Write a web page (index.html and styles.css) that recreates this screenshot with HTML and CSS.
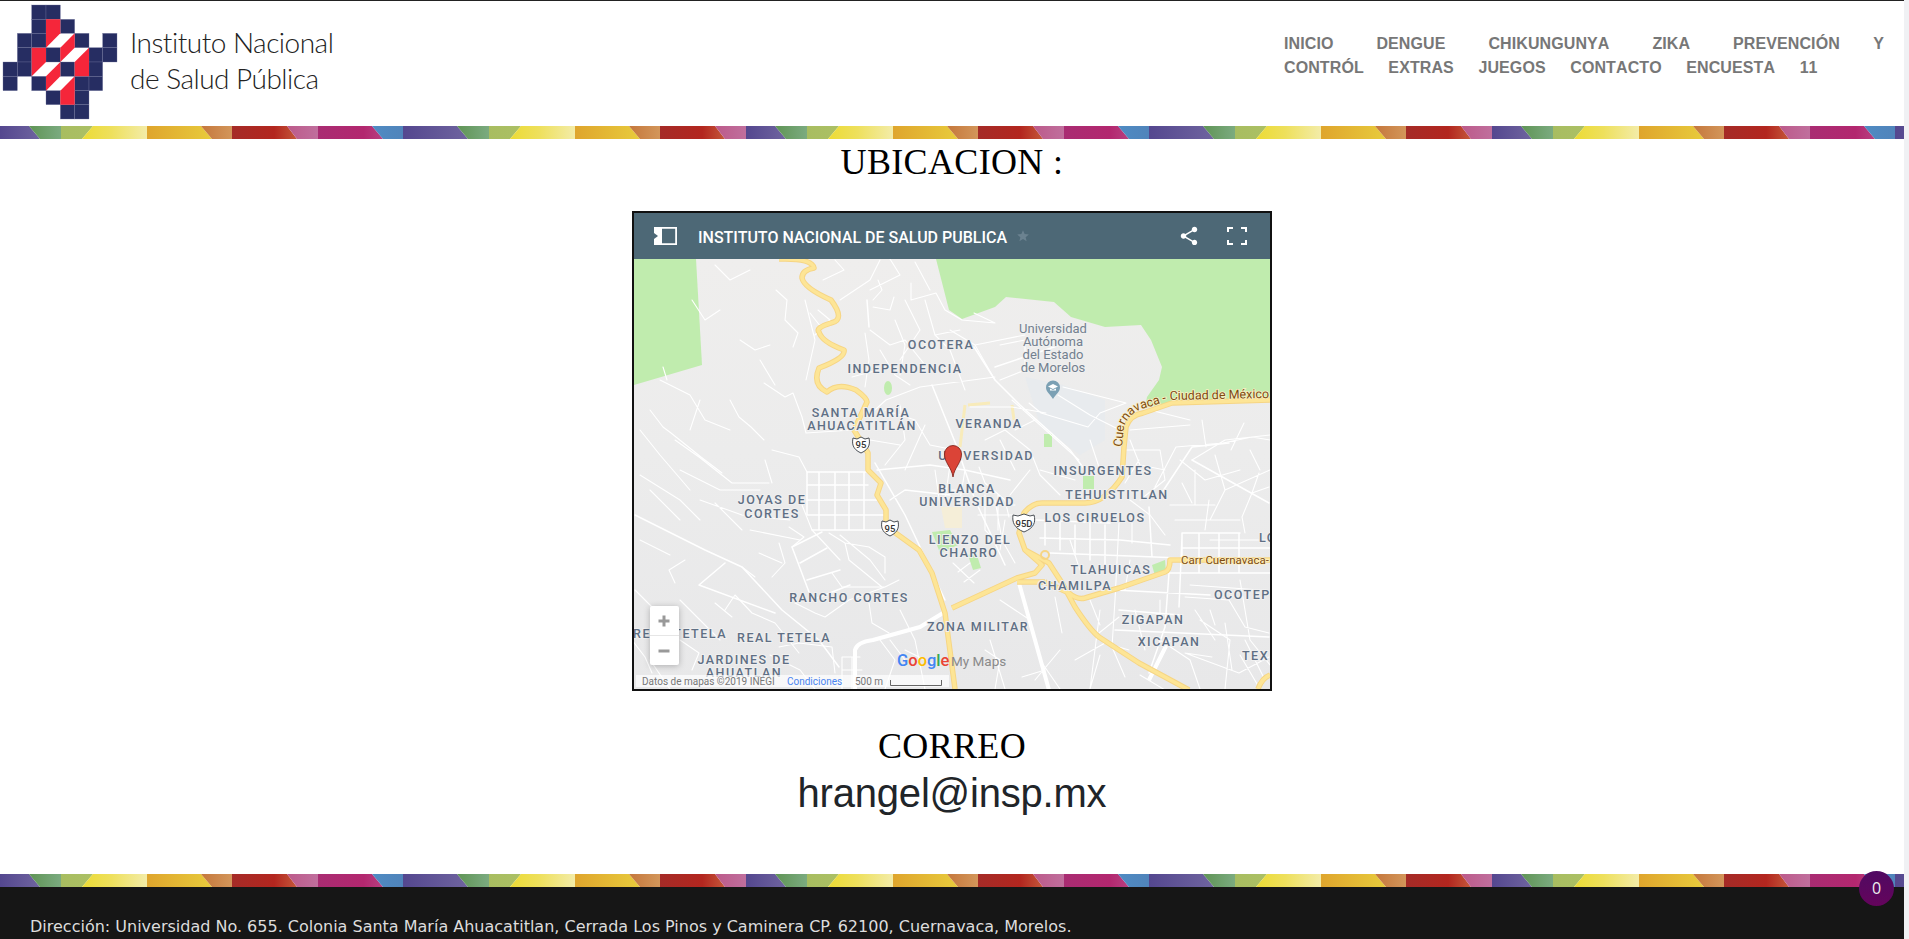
FILE: index.html
```html
<!DOCTYPE html>
<html lang="es">
<head>
<meta charset="utf-8">
<title>Instituto Nacional de Salud Pública</title>
<link rel="stylesheet" href="styles.css">
</head>
<body>
<div class="page">
  <svg class="defs" width="0" height="0" aria-hidden="true">
    <defs>
      <linearGradient id="gPurple"><stop offset="0" stop-color="#54478f"/><stop offset="1" stop-color="#6f649f"/></linearGradient>
      <linearGradient id="gGreen"><stop offset="0" stop-color="#5f9455"/><stop offset="1" stop-color="#7bab80"/></linearGradient>
      <linearGradient id="gLime"><stop offset="0" stop-color="#a8bd60"/><stop offset="1" stop-color="#abc065"/></linearGradient>
      <linearGradient id="gYellow"><stop offset="0" stop-color="#ecdb35"/><stop offset="0.45" stop-color="#eee05c"/><stop offset="1" stop-color="#f3eca8"/></linearGradient>
      <linearGradient id="gAmber"><stop offset="0" stop-color="#dfa52d"/><stop offset="1" stop-color="#e8cb3c"/></linearGradient>
      <linearGradient id="gOrange"><stop offset="0" stop-color="#c5773c"/><stop offset="1" stop-color="#d3965a"/></linearGradient>
      <linearGradient id="gRed"><stop offset="0" stop-color="#a52b27"/><stop offset="0.65" stop-color="#b3261f"/><stop offset="1" stop-color="#c4583a"/></linearGradient>
      <linearGradient id="gPink"><stop offset="0" stop-color="#bc5a8a"/><stop offset="1" stop-color="#c06f9d"/></linearGradient>
      <linearGradient id="gMagenta"><stop offset="0" stop-color="#a92c72"/><stop offset="0.7" stop-color="#b3276f"/><stop offset="1" stop-color="#b84080"/></linearGradient>
      <linearGradient id="gBlue"><stop offset="0" stop-color="#4f8bc3"/><stop offset="1" stop-color="#5084bb"/></linearGradient>
      <linearGradient id="gLand" x1="0" y1="0" x2="0" y2="1"><stop offset="0" stop-color="#efeeed"/><stop offset="0.45" stop-color="#ececec"/><stop offset="1" stop-color="#e8e8e9"/></linearGradient>
      <pattern id="rainbow" width="746" height="13" patternUnits="userSpaceOnUse">
        <polygon fill="url(#gPurple)" points="0,0 29,0 40,13 0,13"/>
        <g id="seq">
          <polygon fill="url(#gGreen)" points="29,0 61,0 61,13 40,13"/>
          <polygon fill="url(#gLime)" points="61,0 93,0 82,13 61,13"/>
          <polygon fill="url(#gYellow)" points="93,0 147,0 147,13 82,13"/>
          <polygon fill="url(#gAmber)" points="147,0 201,0 212,13 147,13"/>
          <polygon fill="url(#gOrange)" points="201,0 232,0 232,13 212,13"/>
          <polygon fill="url(#gRed)" points="232,0 287,0 297,13 232,13"/>
          <polygon fill="url(#gPink)" points="287,0 318,0 318,13 297,13"/>
        </g>
        <polygon fill="url(#gMagenta)" points="318,0 372,0 383,13 318,13"/>
        <polygon fill="url(#gBlue)" points="372,0 403,0 403,13 383,13"/>
        <polygon fill="url(#gPurple)" points="403,0 457,0 468,13 403,13"/>
        <use href="#seq" x="428"/>
      </pattern>
    </defs>
  </svg>

  <header class="site-header">
    <a class="brand" href="#">
      <svg class="brand-mark" viewBox="0 0 390 375" width="130" height="125" aria-hidden="true">
        <g class="cells">
          <rect x="95" y="15" width="43" height="43"/><rect x="138" y="15" width="43" height="43"/>
          <rect x="95" y="58" width="43" height="42"/><rect x="181" y="58" width="43" height="42"/>
          <rect x="52" y="100" width="43" height="43"/><rect x="95" y="100" width="43" height="43"/><rect x="224" y="100" width="43" height="43"/><rect x="308" y="100" width="43" height="43"/>
          <rect x="52" y="143" width="43" height="43"/><rect x="138" y="143" width="43" height="43"/><rect x="267" y="143" width="41" height="43"/><rect x="308" y="143" width="43" height="43"/>
          <rect x="9" y="186" width="43" height="43"/><rect x="52" y="186" width="43" height="43"/><rect x="181" y="186" width="43" height="43"/><rect x="267" y="186" width="41" height="43"/>
          <rect x="9" y="229" width="43" height="43"/><rect x="95" y="229" width="43" height="43"/><rect x="224" y="229" width="43" height="43"/><rect x="267" y="229" width="41" height="43"/>
          <rect x="138" y="272" width="43" height="42"/><rect x="224" y="272" width="43" height="42"/>
          <rect x="181" y="314" width="43" height="43"/><rect x="224" y="314" width="43" height="43"/>
        </g>
        <g class="reds">
          <polygon points="138,58 181,58 181,100 138,143"/>
          <polygon points="181,143 224,100 224,143 181,186"/>
          <polygon points="267,143 267,229 224,229 224,186"/>
          <polygon points="95,143 138,143 138,186 95,229"/>
          <polygon points="181,186 181,229 138,272 138,229"/>
          <polygon points="224,229 224,314 181,314 181,272"/>
        </g>
      </svg>
      <span class="brand-name">Instituto Nacional<br>de Salud Pública</span>
    </a>
    <nav class="site-nav">
      <a href="#">INICIO</a> <a href="#">DENGUE</a> <a href="#">CHIKUNGUNYA</a> <a href="#">ZIKA</a> <a href="#">PREVENCIÓN Y CONTRÓL</a> <a href="#">EXTRAS</a> <a href="#">JUEGOS</a> <a href="#">CONTACTO</a> <a href="#">ENCUESTA</a> <a href="#">11</a>
    </nav>
  </header>
  <svg class="stripe" height="13" aria-hidden="true"><rect width="100%" height="13" fill="url(#rainbow)"/></svg>

  <main class="content">
    <h2 class="title">UBICACION :</h2>
    <div class="map-frame">
      <div class="map-bar">
        <svg class="bar-icon" viewBox="0 0 23 18" width="23" height="18" aria-hidden="true">
          <path d="M0 0h23v18H0z M8 1.800v14.400h13.200V1.800z" fill="#fff" fill-rule="evenodd"/>
          <path d="M0 6l4 3-4 3z" fill="#4d6876"/>
        </svg>
        <span class="map-title">INSTITUTO NACIONAL DE SALUD PUBLICA</span>
        <svg class="bar-star" viewBox="0 0 24 24" width="14" height="14" aria-hidden="true"><path d="M12 17.27L18.18 21l-1.64-7.03L22 9.24l-7.19-.61L12 2 9.19 8.63 2 9.24l5.46 4.73L5.82 21z"/></svg>
        <span class="bar-spacer"></span>
        <svg class="bar-tool" viewBox="0 0 24 24" width="22" height="22" aria-hidden="true"><path d="M18 16.08c-.76 0-1.44.3-1.96.77L8.91 12.7c.05-.23.09-.46.09-.7s-.04-.47-.09-.7l7.05-4.11c.54.5 1.25.81 2.04.81 1.66 0 3-1.34 3-3s-1.34-3-3-3-3 1.34-3 3c0 .24.04.47.09.7L8.04 9.81C7.5 9.31 6.79 9 6 9c-1.66 0-3 1.34-3 3s1.34 3 3 3c.79 0 1.5-.31 2.04-.81l7.12 4.16c-.05.21-.08.43-.08.65 0 1.61 1.31 2.92 2.92 2.92 1.61 0 2.92-1.31 2.92-2.92s-1.31-2.92-2.92-2.92z"/></svg>
        <svg class="bar-full" viewBox="0 0 20 18" width="20" height="18" aria-hidden="true"><path d="M1 5V1H6M14 1H19V5M19 13V17H14M6 17H1V13"/></svg>
      </div>
      <svg class="map" viewBox="634 259 636 430" width="636" height="430" role="img" aria-label="Mapa">
        <rect class="land" x="634" y="259" width="636" height="430"/>
        <polygon class="campus" points="1025,377 1063,385 1105,400 1105,440 1080,455 1040,425"/>
        <polygon class="park" points="634,259 696,259 702,365 634,385"/>
        <polygon class="park" points="936,259 949,310 962,319 995,307 1006,297 1054,302 1071,317 1105,327 1141,325 1151,340 1162,367 1159,380 1147,397 1145,408 1172,402 1270,399 1270,259"/>
        <ellipse class="park" cx="888" cy="388" rx="4" ry="7"/>
        <rect class="park" x="1044" y="434" width="8" height="13"/>
        <rect class="park" x="1083" y="476" width="11" height="13"/>
        <polygon class="park" points="1152,565 1165,560 1166,572 1155,576"/>
        <polygon class="park" points="932,532 950,530 958,545 940,553"/>
        <polygon class="park" points="968,555 976,552 981,568 973,570"/>

        <path class="pale" d="M965 405L960 447M968 405L990 403M1012 405L1014 420"/>
        <polygon class="pale-block" points="941,507 962,507 962,528 945,528"/>

        <path class="road-thin" d="M835 260L844 270L823 280M878 280L882 290L873 300M894 297L890 310L873 307M911 283V300L936 293L945 310L962 320L995 323L974 313M776 290L787 300L785 320L798 333L793 347M810 313L821 327M818 310L830 320L815 335M663 367L667 380M650 410L663 427L671 433L701 457L722 473M730 400L739 417L751 427L764 440M793 393L802 417L806 433L852 430M764 383L785 397L793 393M852 377L878 370M865 333L869 360L865 387M920 387L995 377M920 387L886 400L867 417M970 407H1012L1046 413M1012 400L1079 460M1063 387L1126 403L1100 413L1088 427L1041 413L1029 403M1176 447L1155 487M1176 447L1223 443L1252 437L1270 440M1202 420L1206 447M1244 423L1231 450M675 440L699 457L732 483H769M765 460L772 483M772 450L799 457L807 472M715 503L742 530M789 527L804 537L792 547M779 543L785 563L772 577M759 553L782 563M685 560L669 570L675 583M715 603L732 617M725 610L735 595L752 613L775 623L799 653M755 577L742 567M795 603L815 613L825 617L849 600L885 587L899 580M832 573L842 587H859L885 587M845 543L849 560L865 573L882 587M829 533L845 543L869 547L885 557V573M869 603L872 623L889 633M842 657H860M842 670H862M842 657V689M852 657V689M779 647L799 643L832 647L835 673M632 640L645 657L652 673M680 640L699 653L692 670M979 467L985 483L1005 500L1009 517M952 490L995 493M995 500L1002 540L1015 563M953 563L974 583M958 572L970 563M964 582L980 570M1022 677L1045 670M1075 660L1105 643L1129 650M1119 617L1099 633M1119 523L1115 600L1112 647L1125 677M1055 597L1062 633M1185 597L1229 600L1245 627L1269 633M1212 657L1185 653M1185 653L1239 673L1269 657M1225 623L1232 670M1245 533L1242 517L1252 493L1269 487M1209 500L1205 530M1182 483L1192 503M1259 473L1252 493M1139 460L1125 483M1132 517V543M740 340L755 350L770 345M692 300L705 320L720 310M715 265L730 280L750 270M805 300L815 340L806 380M880 260L870 280L840 300M890 259L900 275L870 290M905 300L920 330L900 360M915 262L930 290M950 330L975 345L995 380M975 345L1025 335M1000 345L1025 340V370L1000 380M1058 395L1090 415L1120 430M1090 440L1100 470M1125 450L1160 450L1165 480L1140 500M1192 460L1225 440L1270 435M1270 470L1225 490L1210 520M1130 430L1190 425M1150 410L1190 420M700 500L742 515L790 520M680 470L720 490L760 490M640 475L680 500L700 520M750 530L800 540M800 500L812 530L840 560M840 535L870 560L885 580M635 590L665 620M680 600L700 620L720 640M650 660L670 689M1000 600L1030 620L1040 660L1060 689M1100 610L1090 689M1160 640L1190 660L1200 689M1200 620L1230 640L1225 689M1240 580L1250 640L1270 665M1035 680L1060 650M990 640L1005 689M1080 570L1070 540M1130 560L1125 590M660 380L690 395L705 420L730 430M700 400L690 430M760 360L775 385M640 430L660 455L690 490M650 490L680 520M640 540L670 555M770 655L800 670L815 689M900 610L915 640L925 689M890 640L905 660M985 650L1000 660L995 689M1160 600V620M1210 610L1215 625M1245 640L1265 680M1180 460L1205 480L1240 470M1100 655L1090 689M1140 675L1165 690M870 330L890 345L905 340L925 365M895 320L905 345L900 375M880 350L895 375L910 385M925 300L935 335L950 350L965 390M935 335L960 330M885 410L915 420L930 445L955 450M900 405L905 440L885 465M925 425L905 470M870 440L900 445M935 470L940 505M950 465L945 500M965 470L960 500M985 440L1005 430L1030 450L1040 475L1060 495M1000 440L1015 470M1030 470L1010 495M1040 470L1075 480M1015 430L1035 420M975 505H1015M978 515H1012M985 495V530M998 495V530M1005 520L1000 550M985 530L1000 545M1130 440L1140 465L1165 470M1195 470V505M1215 455L1225 490M1250 450L1260 470M1130 500L1150 515L1165 535M1170 505H1215M1175 520H1240M1210 540H1270M1190 585L1260 590M1195 610L1215 640M1240 655L1260 689M1090 600L1100 625M1135 610L1145 650M880 640L895 660L885 689M905 650L935 665"/>
        <path class="road" d="M807 472H870M807 485H868M807 500H878M807 515H884M812 530H885M807 472V515M819 472V530M835 472V530M849 472V530M864 472V530M875 463L905 515L945 600M792 547L812 600M792 547L822 532M800 563L827 548M807 580L840 570M812 600L850 585M635 515L705 550L742 567L782 610L819 640L839 667M699 585L725 563M699 585L775 613M877 470L930 465L965 470L1010 480M932 385L957 447L975 500L1005 565M974 347L995 380L1020 405L1070 450L1085 470M995 367L1060 345M867 300L869 327M890 500L905 490L950 495M1115 630L1269 637M1149 507L1152 557M1169 573L1165 627L1149 673M1182 537L1179 607M1182 533H1240M1182 548H1270M1160 573H1270M1182 533V560M1199 533V573M1219 533V573M1239 533V573M1159 497L1192 447L1229 443M1192 460L1269 503M1035 520L1110 523M1040 538L1120 540L1170 545M1050 553L1130 556L1180 558M1045 520V545M1060 520V550M1075 525V555M1090 520V560M1105 525V570M1115 590L1210 595M1119 610L1180 615"/>
        <path class="road-wide" d="M855 690V650Q857 642 873 640L920 627L943 613M1019 583L1049 690M1169 640L1149 680"/>

        <path class="hw-b" d="M779 259Q812 258 814 268Q802 270 802 278Q804 288 831 300Q846 320 831 323Q815 328 819 332Q822 342 844 350Q846 358 819 368Q812 385 827 392Q838 382 856 390Q867 398 867 402L854 430L868 453V470L881 483L877 495L886 510V520L890 529L919 550L932 573L945 613L955 689M952 608L1017 578L1035 573L1042 565L1025 550L1019 533L1024 513Q1032 503 1042 503L1085 503Q1105 503 1122 477L1124 447L1126 427Q1130 415 1143 413L1172 403L1270 400M1025 550L1049 563L1062 583L1075 607Q1090 630 1099 637L1139 663L1189 690M1017 582H1045M1045 582L1069 593Q1077 600 1085 598L1119 588L1165 572Q1170 570 1170 560H1270M1258 689Q1262 678 1270 675"/>
        <path class="hw" d="M779 259Q812 258 814 268Q802 270 802 278Q804 288 831 300Q846 320 831 323Q815 328 819 332Q822 342 844 350Q846 358 819 368Q812 385 827 392Q838 382 856 390Q867 398 867 402L854 430L868 453V470L881 483L877 495L886 510V520L890 529L919 550L932 573L945 613L955 689M952 608L1017 578L1035 573L1042 565L1025 550L1019 533L1024 513Q1032 503 1042 503L1085 503Q1105 503 1122 477L1124 447L1126 427Q1130 415 1143 413L1172 403L1270 400M1025 550L1049 563L1062 583L1075 607Q1090 630 1099 637L1139 663L1189 690M1017 582H1045M1045 582L1069 593Q1077 600 1085 598L1119 588L1165 572Q1170 570 1170 560H1270M1258 689Q1262 678 1270 675"/>
        <circle class="hw-ring" cx="1045" cy="555" r="4"/>

        <path id="cuernavacaRoad" class="none" d="M1122 447L1124 427Q1130 412 1145 408L1172 400L1270 398"/>
        <text class="road-label road-label-curve"><textPath href="#cuernavacaRoad">Cuernavaca - Ciudad de México</textPath></text>
        <text class="road-label" x="1181" y="564">Carr Cuernavaca-</text>

        <g class="labels">
          <text x="941" y="349">OCOTERA</text>
          <text x="905" y="373">INDEPENDENCIA</text>
          <text x="861" y="417">SANTA MARÍA</text>
          <text x="862" y="430">AHUACATITLÁN</text>
          <text x="989" y="428">VERANDA</text>
          <text x="986" y="460">UNIVERSIDAD</text>
          <text x="967" y="493">BLANCA</text>
          <text x="967" y="506">UNIVERSIDAD</text>
          <text x="1103" y="475">INSURGENTES</text>
          <text x="1117" y="499">TEHUISTITLAN</text>
          <text x="772" y="504">JOYAS DE</text>
          <text x="772" y="518">CORTES</text>
          <text x="970" y="544">LIENZO DEL</text>
          <text x="969" y="557">CHARRO</text>
          <text x="1095" y="522">LOS CIRUELOS</text>
          <text x="1111" y="574">TLAHUICAS</text>
          <text x="1075" y="590">CHAMILPA</text>
          <text x="849" y="602">RANCHO CORTES</text>
          <text x="978" y="631">ZONA MILITAR</text>
          <text x="1153" y="624">ZIGAPAN</text>
          <text x="1169" y="646">XICAPAN</text>
          <text x="784" y="642">REAL TETELA</text>
          <text x="680" y="638">REAL TETELA</text>
          <text x="744" y="664">JARDINES DE</text>
          <text x="744" y="677">AHUATLAN</text>
          <text class="start" x="1214" y="599">OCOTEP</text>
          <text class="start" x="1259" y="542">LO</text>
          <text class="start" x="1242" y="660">TEX</text>
        </g>

        <g class="poi">
          <text x="1053" y="333">Universidad</text>
          <text x="1053" y="346">Autónoma</text>
          <text x="1053" y="359">del Estado</text>
          <text x="1053" y="372">de Morelos</text>
        </g>
        <path class="poi-pin" d="M1053 399C1050 394 1046 392 1046 387.500A7 7 0 0 1 1060 387.500C1060 392 1056 394 1053 399Z"/>
        <path class="poi-cap" d="M1053 384L1058 386.500L1053 389L1048 386.500ZM1050 388.500V390.500H1056V388.500L1053 390Z"/>

        <g class="shield">
          <path d="M853 438L857 439L861 437L865 439L869 438C870 443 870 449 861 453C852 449 852 443 853 438Z"/>
          <text x="861" y="448">95</text>
        </g>
        <g class="shield">
          <path d="M882 521L886 522L890 520L894 522L898 521C899 526 899 532 890 536C881 532 881 526 882 521Z"/>
          <text x="890" y="532">95</text>
        </g>
        <g class="shield">
          <path d="M1013 515L1018 516L1024 514L1030 516L1034 515C1036 522 1034 528 1024 532C1014 528 1012 522 1013 515Z"/>
          <text x="1024" y="527">95D</text>
        </g>

        <path class="marker" d="M953 477C951.500 467 944.500 463 944.500 454A8.500 8.500 0 0 1 961.500 454C961.500 463 954.500 467 953 477Z"/>

        <g class="zoom-box">
          <rect x="650" y="606" width="29" height="59" rx="2"/>
        </g>
        <line class="zoom-div" x1="650" y1="635.500" x2="679" y2="635.500"/>
        <path class="zoom-glyph" d="M658.500 621H669.500M664 615.500V626.500M658.500 651H669.500"/>

        <text class="google" x="897" y="666"><tspan fill="#4285f4">G</tspan><tspan fill="#ea4335">o</tspan><tspan fill="#fbbc05">o</tspan><tspan fill="#4285f4">g</tspan><tspan fill="#34a853">l</tspan><tspan fill="#ea4335">e</tspan></text>
        <text class="mymaps" x="951" y="666">My Maps</text>

        <rect class="attrib" x="636" y="675" width="313" height="12"/>
        <text class="attrib-text" x="642" y="685">Datos de mapas ©2019 INEGI</text>
        <text class="attrib-link" x="787" y="685">Condiciones</text>
        <text class="attrib-text" x="855" y="685">500 m</text>
        <path class="scale" d="M890.500 680V685.500H941.500V680"/>
      </svg>
    </div>
    <h2 class="title title-mail">CORREO</h2>
    <p class="mail">hrangel@insp.mx</p>
  </main>

  <svg class="stripe" height="13" aria-hidden="true"><rect width="100%" height="13" fill="url(#rainbow)"/></svg>
  <footer class="site-footer">
    <p>Dirección: Universidad No. 655. Colonia Santa María Ahuacatitlan, Cerrada Los Pinos y Caminera CP. 62100, Cuernavaca, Morelos.</p>
  </footer>
  <div class="badge">0</div>
</div>
</body>
</html>
```
FILE: styles.css
```css
html, body {
  margin: 0;
  height: 100%;
  overflow: hidden;
  background: #f0f1f4;
}
.page {
  margin-right: 5px;
  height: 939px;
  overflow: hidden;
  background: #fff;
  display: flex;
  flex-direction: column;
}
.defs { position: absolute; }
.site-header {
  box-sizing: border-box;
  height: 126px;
  border-top: 1px solid #222;
  display: flex;
  justify-content: space-between;
  align-items: flex-start;
}
.brand {
  display: flex;
  align-items: flex-start;
  text-decoration: none;
  margin-top: -1px;
}
.brand-mark { display: block; flex: none; }
.cells rect { fill: #262d62; stroke: #7477a0; stroke-width: 1; }
.reds polygon { fill: #f5263a; }
.brand-name {
  margin: 24px 0 0 0;
  font: 300 28px/36px Lato, sans-serif;
  letter-spacing: -0.5px;
  color: #222;
  white-space: nowrap;
}
.site-nav {
  width: 600px;
  margin: 31px 20px 0 0;
  font: bold 16px/24px "Liberation Sans", sans-serif;
  font-kerning: none;
  letter-spacing: 0.1px;
  text-align: justify;
  word-spacing: 10.5px;
}
.site-nav a {
  color: #777;
  text-decoration: none;
  margin-right: 9.500px;
}
.stripe { display: block; width: 100%; flex: none; }
.content {
  flex: none;
  height: 735px;
  display: flex;
  flex-direction: column;
  align-items: center;
}
.title {
  margin: 3px 0 28px;
  font: 400 36px/41px "Liberation Serif", serif;
  letter-spacing: 0.35px;
  color: #000;
}
.title-mail { margin: 35px 0 0; }
.mail {
  margin: 3px 0 0;
  font: 40px/46px "Liberation Sans", sans-serif;
  letter-spacing: -0.2px;
  color: #212529;
}
.map-frame {
  box-sizing: border-box;
  width: 640px;
  height: 480px;
  border: 2px solid #111;
  flex: none;
  display: flex;
  flex-direction: column;
}
.map-bar {
  height: 46px;
  flex: none;
  background: #4d6876;
  display: flex;
  align-items: center;
  padding: 0 23px 0 20px;
  fill: #fff;
}
.map-title {
  margin-left: 21px;
  font: 500 16px Roboto, sans-serif;
  color: #fff;
  white-space: nowrap;
  padding-top: 3px;
}
.bar-star { margin-left: 9px; fill: #6b8290; }
.bar-spacer { flex: 1; }
.bar-tool { margin-left: 27px; }
.bar-full { margin-left: 27px; fill: none; stroke: #fff; stroke-width: 2; }
.map { display: block; flex: none; }
.land { fill: url(#gLand); }
.campus { fill: #e8ebee; }
.park { fill: #c0ecae; }
.pale { fill: none; stroke: #f8ebba; stroke-width: 3; }
.pale-block { fill: #f5eed8; }
.road-thin, .road, .road-wide, .hw, .hw-b, .hw-ring, .none { fill: none; }
.road-thin { stroke: #fff; stroke-width: 1.100; stroke-linejoin: round; stroke-linecap: round; }
.road { stroke: #fff; stroke-width: 1.500; stroke-linejoin: round; stroke-linecap: round; }
.road-wide { stroke: #fff; stroke-width: 4; stroke-linejoin: round; }
.hw-b { stroke: #f6d584; stroke-width: 5.500; stroke-linejoin: round; }
.hw { stroke: #fde596; stroke-width: 3.600; stroke-linejoin: round; }
.hw-ring { stroke: #f6d584; stroke-width: 2; }
.road-label {
  font: 400 11.500px Roboto, sans-serif;
  fill: #7c4a10;
  stroke: #fdf0c4;
  stroke-width: 1.500px;
  paint-order: stroke;
}
.road-label-curve { font-size: 12.500px; }
.labels text {
  font: 500 12.500px Roboto, sans-serif;
  letter-spacing: 1.500px;
  fill: #5f6f84;
  text-anchor: middle;
  stroke: #f0f0f0;
  stroke-width: 2px;
  paint-order: stroke;
}
.labels text.start { text-anchor: start; }
.poi text {
  font: 400 13px Roboto, sans-serif;
  fill: #73808f;
  text-anchor: middle;
  stroke: #f0f0f0;
  stroke-width: 2px;
  paint-order: stroke;
}
.poi-pin { fill: #7ba0b4; }
.poi-cap { fill: #fff; }
.shield path { fill: #fff; stroke: #4a4f55; stroke-width: 1; }
.shield text {
  font: 500 9.500px Roboto, sans-serif;
  fill: #333;
  text-anchor: middle;
}
.marker { fill: #db4437; stroke: #7a1a12; stroke-width: 0.800; }
.zoom-box rect { fill: #fff; filter: drop-shadow(0 1px 3px rgba(0, 0, 0, 0.25)); }
.zoom-div { stroke: #e6e6e6; stroke-width: 1; }
.zoom-glyph { fill: none; stroke: #999; stroke-width: 3; }
.google { font: 500 16.500px Roboto, sans-serif; }
.mymaps { font: 400 13.500px Roboto, sans-serif; fill: #8a8a8a; }
.attrib { fill: #fff; fill-opacity: 0.7; }
.attrib-text { font: 400 10px Roboto, sans-serif; fill: #777; }
.attrib-link { font: 400 10px Roboto, sans-serif; fill: #4a85f0; }
.scale { fill: none; stroke: #666; stroke-width: 1; }
.site-footer {
  flex: 1;
  background: #161616;
  padding-top: 30px;
  box-sizing: border-box;
}
.site-footer p {
  margin: 0 0 0 30px;
  font: 16px/20px "DejaVu Sans", sans-serif;
  color: #ddd;
  white-space: nowrap;
}
.badge {
  position: fixed;
  left: 1859px;
  top: 871px;
  width: 35px;
  height: 35px;
  border-radius: 50%;
  background: linear-gradient(#500a62, #64045c);
  color: #eee;
  font: 16px/35px "Open Sans", sans-serif;
  text-align: center;
}
```
